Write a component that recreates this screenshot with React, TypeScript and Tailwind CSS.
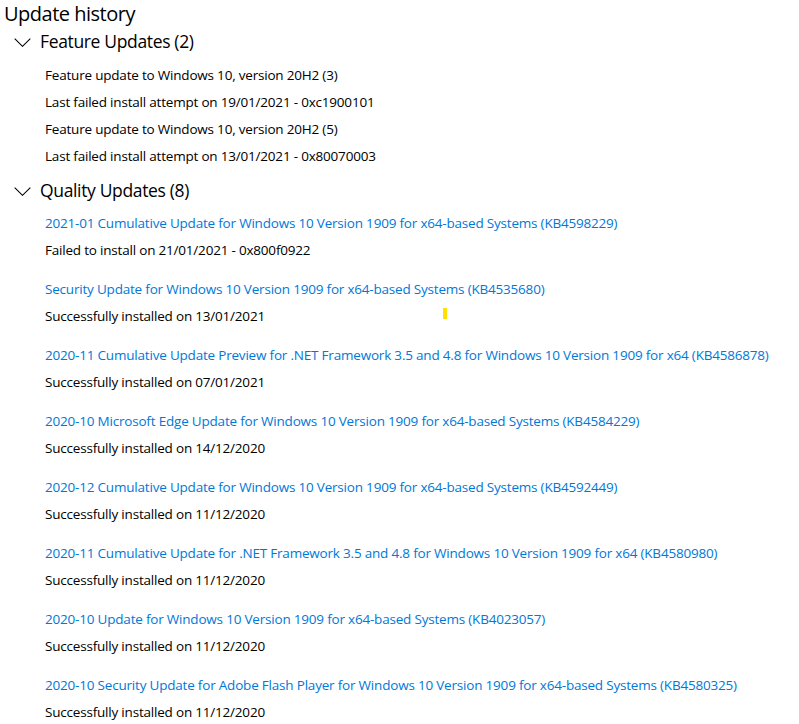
import React from 'react';

const font = { fontFamily: '"Segoe UI", "Open Sans", "Noto Sans", sans-serif' };

const featureItems = [
  'Feature update to Windows 10, version 20H2 (3)',
  'Last failed install attempt on 19/01/2021 - 0xc1900101',
  'Feature update to Windows 10, version 20H2 (5)',
  'Last failed install attempt on 13/01/2021 - 0x80070003',
];

const qualityItems = [
  {
    title: '2021-01 Cumulative Update for Windows 10 Version 1909 for x64-based Systems (KB4598229)',
    status: 'Failed to install on 21/01/2021 - 0x800f0922',
  },
  {
    title: 'Security Update for Windows 10 Version 1909 for x64-based Systems (KB4535680)',
    status: 'Successfully installed on 13/01/2021',
  },
  {
    title: '2020-11 Cumulative Update Preview for .NET Framework 3.5 and 4.8 for Windows 10 Version 1909 for x64 (KB4586878)',
    status: 'Successfully installed on 07/01/2021',
  },
  {
    title: '2020-10 Microsoft Edge Update for Windows 10 Version 1909 for x64-based Systems (KB4584229)',
    status: 'Successfully installed on 14/12/2020',
  },
  {
    title: '2020-12 Cumulative Update for Windows 10 Version 1909 for x64-based Systems (KB4592449)',
    status: 'Successfully installed on 11/12/2020',
  },
  {
    title: '2020-11 Cumulative Update for .NET Framework 3.5 and 4.8 for Windows 10 Version 1909 for x64 (KB4580980)',
    status: 'Successfully installed on 11/12/2020',
  },
  {
    title: '2020-10 Update for Windows 10 Version 1909 for x64-based Systems (KB4023057)',
    status: 'Successfully installed on 11/12/2020',
  },
  {
    title: '2020-10 Security Update for Adobe Flash Player for Windows 10 Version 1909 for x64-based Systems (KB4580325)',
    status: 'Successfully installed on 11/12/2020',
  },
];

const Chevron: React.FC = () => (
  <svg width="17" height="9" viewBox="0 0 17 9" className="shrink-0">
    <path d="M0.7 0.7 L8.5 8.3 L16.3 0.7" fill="none" stroke="#000" strokeWidth="1.1" />
  </svg>
);

const SectionHeader: React.FC<{ label: string }> = ({ label }) => (
  <div className="flex items-center h-[30px] pl-[14px]">
    <Chevron />
    <span className="ml-[9px] text-[17.5px] tracking-[-0.35px] leading-none text-black">{label}</span>
  </div>
);

const App: React.FC = () => {
  return (
    <div className="relative w-[799px] h-[724px] bg-white overflow-hidden text-black" style={font}>
      <h1 className="pl-[4px] pt-[1px] text-[20px] tracking-[-0.5px] leading-[26px] font-normal">Update history</h1>

      <SectionHeader label="Feature Updates (2)" />
      <div className="pl-[45px] pt-[5px]">
        {featureItems.map((t, i) => (
          <div key={i} className="h-[27px] flex items-center text-[13.5px] tracking-[-0.2px]">{t}</div>
        ))}
      </div>

      <div className="pt-[6px]">
        <SectionHeader label="Quality Updates (8)" />
      </div>
      <div className="pl-[45px] pt-[4px]">
        {qualityItems.map((q, i) => (
          <div key={i} className="h-[66px]">
            <div className="h-[27px] flex items-center text-[13.5px] tracking-[-0.2px] text-[#0078d7] whitespace-nowrap">{q.title}</div>
            <div className="h-[27px] flex items-center text-[13.5px] tracking-[-0.2px]">{q.status}</div>
          </div>
        ))}
      </div>

      <div className="absolute left-[443px] top-[308px] w-[4px] h-[11px] bg-[#ffe000]" />
    </div>
  );
};

export default App;
